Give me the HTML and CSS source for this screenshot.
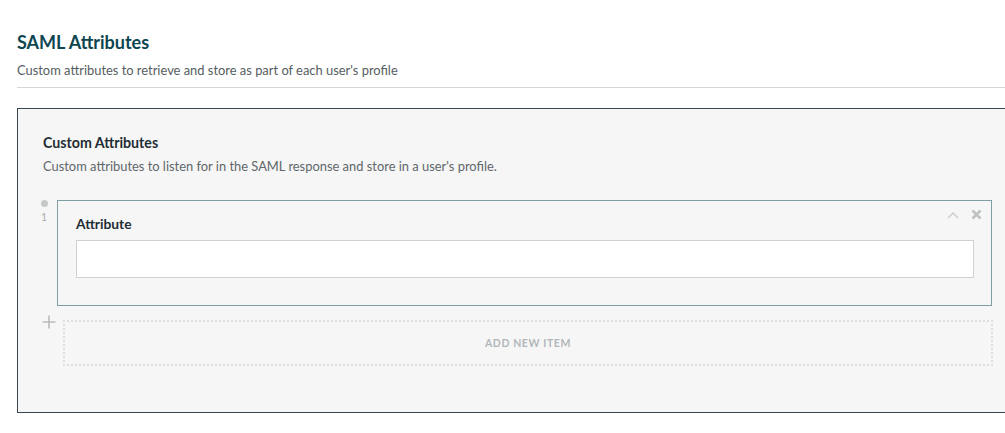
FILE: index.html
```html
<!DOCTYPE html>
<html>
<head>
<meta charset="utf-8">
<link rel="stylesheet" href="styles.css">
</head>
<body>
<div class="page">
  <header class="section-head">
    <h2 class="title">SAML Attributes</h2>
    <p class="subtitle">Custom attributes to retrieve and store as part of each user's profile</p>
  </header>
  <section class="panel">
    <h3 class="panel-title">Custom Attributes</h3>
    <p class="panel-desc">Custom attributes to listen for in the SAML response and store in a user's profile.</p>
    <div class="item-row">
      <div class="gutter">
        <span class="dot"></span>
        <span class="index">1</span>
      </div>
      <div class="item">
        <div class="item-tools">
          <svg class="chev" width="12" height="8" viewBox="0 0 12 8"><path d="M1 7 L6 2 L11 7" fill="none" stroke="#c9cccd" stroke-width="1.4"/></svg>
          <svg class="close" width="11" height="11" viewBox="0 0 11 11"><path d="M1.5 1.5 L9.5 9.5 M9.5 1.5 L1.5 9.5" fill="none" stroke="#bfc2c3" stroke-width="2.6"/></svg>
        </div>
        <label class="field-label">Attribute</label>
        <div class="input"></div>
      </div>
    </div>
    <div class="add-row">
      <div class="add-gutter">
        <svg width="14" height="14" viewBox="0 0 14 14"><path d="M7 0.5 V13.5 M0.5 7 H13.5" stroke="#b9bcbe" stroke-width="1.6"/></svg>
      </div>
      <div class="add-box">ADD NEW ITEM</div>
    </div>
  </section>
</div>
</body>
</html>
```
FILE: styles.css
```css
html, body {
  margin: 0;
  padding: 0;
  background: #ffffff;
  overflow: hidden;
}
body {
  font-family: Lato, "Open Sans", "Liberation Sans", sans-serif;
  color: #1f2d35;
}
.page {
  padding: 31px 0 0 17px;
  width: 1040px;
}
.section-head {
  border-bottom: 1px solid #d3d5d6;
  padding-bottom: 9px;
}
.title {
  margin: 0;
  font-size: 18px;
  line-height: 22px;
  font-weight: 700;
  color: #0d4651;
}
.subtitle {
  margin: 9px 0 0;
  font-size: 12.9px;
  line-height: 16px;
  color: #555d61;
}
.panel {
  margin-top: 20px;
  width: 1003px;
  box-sizing: border-box;
  background: #f6f6f6;
  border: 1px solid #37474f;
  padding: 25px 0 46px 25px;
}
.panel-title {
  margin: 0;
  font-size: 14.2px;
  line-height: 18px;
  font-weight: 700;
  color: #1f2d35;
}
.panel-desc {
  margin: 6px 0 0;
  font-size: 12.9px;
  line-height: 16px;
  color: #5f676b;
}
.item-row {
  display: flex;
  margin-top: 26px;
}
.gutter {
  width: 14px;
  display: flex;
  flex-direction: column;
  align-items: flex-start;
  padding-top: 0;
}
.dot {
  width: 7px;
  height: 7px;
  border-radius: 50%;
  background: #c5c7c8;
  margin-left: -2px;
}
.index {
  font-size: 10.5px;
  line-height: 12px;
  color: #a9adaf;
  margin-top: 4px;
  margin-left: -2px;
}
.item {
  position: relative;
  width: 935px;
  box-sizing: border-box;
  border: 1px solid #7d9ea2;
  padding: 14px 17px 27px 18px;
}
.item-tools {
  position: absolute;
  top: 8px;
  right: 9px;
  display: flex;
  align-items: center;
  gap: 12px;
}
.field-label {
  display: block;
  font-size: 13.8px;
  line-height: 18px;
  font-weight: 700;
  color: #1f2d35;
}
.input {
  margin-top: 7px;
  height: 36px;
  background: #ffffff;
  border: 1px solid #cfd2d3;
}
.add-row {
  display: flex;
  margin-top: 14px;
}
.add-gutter {
  width: 20px;
}
.add-gutter svg {
  display: block;
  margin-left: -1px;
  margin-top: -5px;
}
.add-box {
  width: 930px;
  height: 46px;
  box-sizing: border-box;
  border: 2px dotted #dcdedf;
  display: flex;
  align-items: center;
  justify-content: center;
  font-size: 10.5px;
  font-weight: 700;
  letter-spacing: 0.6px;
  color: #b2b7ba;
}
```
